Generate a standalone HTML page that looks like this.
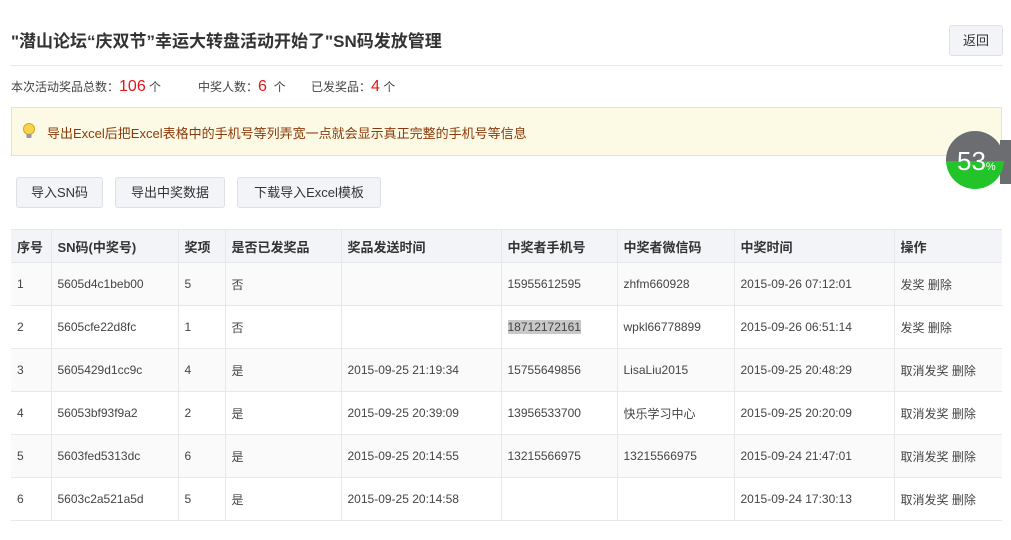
<!DOCTYPE html>
<html><head><meta charset="utf-8"><style>
body{margin:0;width:1011px;height:540px;overflow:hidden;background:#fff;font-family:"Liberation Sans","Noto Sans CJK SC",sans-serif;color:#333;position:relative}
.a{position:absolute}
h1{position:absolute;left:11px;top:27px;margin:0;font-size:17px;font-weight:bold;color:#333}
.btn{position:absolute;background:#f3f4f8;border:1px solid #dde0e6;border-radius:3px;font-size:13px;color:#333;text-align:center;box-sizing:border-box;line-height:29px;height:31px}
.red{color:#e4161a;font-size:16px}
table{position:absolute;left:11px;top:229px;border-collapse:collapse;font-size:12px;color:#444}
td,th{border:1px solid #e6e8ec;border-left:none;border-right:none;padding:0 0 0 6px;text-align:left;height:43px;box-sizing:border-box}
td+td,th+th{border-left:1px solid #e6e8ec}
th{background:#f3f4f8;font-size:13px;color:#333;height:33px}
tr.o td{background:#fafafa}
</style></head><body>
<h1>"潜山论坛“庆双节”幸运大转盘活动开始了"SN码发放管理</h1>
<div class="btn" style="left:949px;top:25px;width:54px">返回</div>
<div class="a" style="left:11px;top:65px;width:992px;height:1px;background:#e8e8e8"></div>
<div class="a" style="left:11px;top:78px;font-size:12px;color:#444">本次活动奖品总数：<span class="red">106</span> 个</div>
<div class="a" style="left:198px;top:78px;font-size:12px;color:#444">中奖人数：<span class="red">6</span>&nbsp; 个</div>
<div class="a" style="left:311px;top:78px;font-size:12px;color:#444">已发奖品：<span class="red">4</span> 个</div>
<div class="a" style="left:11px;top:107px;width:991px;height:49px;background:#fcf9e4;border:1px solid #f3e5a8;box-sizing:border-box"></div>
<svg class="a" style="left:22px;top:123px" width="14" height="16" viewBox="0 0 14 16"><circle cx="7" cy="6" r="5.5" fill="#f9d34a" stroke="#d9a520"/><rect x="4.5" y="11" width="5" height="4" rx="1" fill="#999"/></svg>
<div class="a" style="left:47px;top:123px;font-size:13px;color:#8a3a0a">导出Excel后把Excel表格中的手机号等列弄宽一点就会显示真正完整的手机号等信息</div>
<div class="a" style="left:1000px;top:140px;width:11px;height:44px;background:#6b6d70"></div>
<div class="a" style="left:946px;top:131px;width:58px;height:58px;border-radius:50%;overflow:hidden;background:linear-gradient(#6b6d70 0 52%,#22c42a 52%)"></div>
<div class="a" style="left:957px;top:146px;font-size:26px;color:#fff">53<span style="font-size:11px">%</span></div>
<div class="btn" style="left:16px;top:177px;width:87px">导入SN码</div>
<div class="btn" style="left:115px;top:177px;width:110px">导出中奖数据</div>
<div class="btn" style="left:237px;top:177px;width:144px">下载导入Excel模板</div>
<table>
<tr><th style="width:40px">序号</th><th style="width:127px">SN码(中奖号)</th><th style="width:47px">奖项</th><th style="width:116px">是否已发奖品</th><th style="width:160px">奖品发送时间</th><th style="width:116px">中奖者手机号</th><th style="width:117px">中奖者微信码</th><th style="width:160px">中奖时间</th><th style="width:108px">操作</th></tr>
<tr class="o"><td>1</td><td>5605d4c1beb00</td><td>5</td><td>否</td><td></td><td>15955612595</td><td>zhfm660928</td><td>2015-09-26 07:12:01</td><td>发奖 删除</td></tr>
<tr><td>2</td><td>5605cfe22d8fc</td><td>1</td><td>否</td><td></td><td><span style="background:#c8c8c8">18712172161</span></td><td>wpkl66778899</td><td>2015-09-26 06:51:14</td><td>发奖 删除</td></tr>
<tr class="o"><td>3</td><td>5605429d1cc9c</td><td>4</td><td>是</td><td>2015-09-25 21:19:34</td><td>15755649856</td><td>LisaLiu2015</td><td>2015-09-25 20:48:29</td><td>取消发奖 删除</td></tr>
<tr><td>4</td><td>56053bf93f9a2</td><td>2</td><td>是</td><td>2015-09-25 20:39:09</td><td>13956533700</td><td>快乐学习中心</td><td>2015-09-25 20:20:09</td><td>取消发奖 删除</td></tr>
<tr class="o"><td>5</td><td>5603fed5313dc</td><td>6</td><td>是</td><td>2015-09-25 20:14:55</td><td>13215566975</td><td>13215566975</td><td>2015-09-24 21:47:01</td><td>取消发奖 删除</td></tr>
<tr><td>6</td><td>5603c2a521a5d</td><td>5</td><td>是</td><td>2015-09-25 20:14:58</td><td></td><td></td><td>2015-09-24 17:30:13</td><td>取消发奖 删除</td></tr>
</table>
</body></html>
